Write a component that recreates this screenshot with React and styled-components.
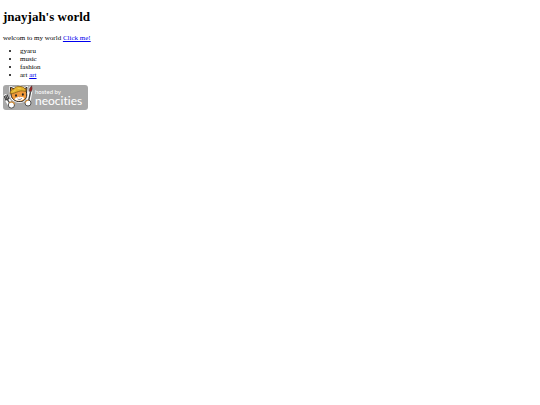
import styled, { createGlobalStyle } from "styled-components";

const GlobalStyle = createGlobalStyle`
	body {
		margin: 0;
		background: #fff;
		color: #000;
		font-family: "Liberation Serif", "Times New Roman", serif;
		font-size: 7px;
		line-height: 8px;
	}
`;

const Page = styled.main`
	padding: 9px 3px;
`;

const Title = styled.h1`
	margin: 0 0 9px;
	font-size: 13px;
	line-height: 16px;
`;

const Intro = styled.p`
	margin: 0 0 5px;
`;

const Link = styled.a`
	color: #0000ee;
	text-decoration: underline;
`;

const Interests = styled.ul`
	margin: 0 0 6px;
	padding-left: 17px;
`;

const BadgeLink = styled.a`
	display: inline-block;
`;

const Badge = styled.svg`
	display: block;
	width: 85px;
	height: 25px;
`;

const BadgeText = styled.text`
	fill: #fff;
	font-family: Lato, "Open Sans", sans-serif;
	font-size: ${(props) => props.$size}px;
	font-variant-ligatures: none;
`;

const NeocitiesBadge = () => {
	return (
		<Badge viewBox="0 0 85 25" role="img" aria-label="Hosted by Neocities">
			<rect width="85" height="25" rx="3" fill="#a8a8a8" />
			{/* fork */}
			<path d="M3 11.5l1 2.5L7 19" stroke="#fff" strokeWidth="5" strokeLinecap="round" fill="none" />
			<path
				d="M1.4 11.4l1.3 3.4 3.1-1.2-1.6-3.7M2.8 10.6l1.3 3.6L7.4 19"
				fill="none"
				stroke="#444"
				strokeWidth="1.3"
				strokeLinecap="round"
			/>
			{/* brush */}
			<path d="M28 3l-2.4 13" stroke="#fff" strokeWidth="4" strokeLinecap="round" />
			<path d="M27.5 7l-1.9 9" stroke="#444" strokeWidth="1.4" />
			<path d="M26.2 6.2c0-2.6 1-4 2.5-5.4 1 2 .8 3.9-.5 5.9z" fill="#9c2222" stroke="#333" strokeWidth=".6" />
			{/* cat */}
			<g transform="translate(2.4 .7) scale(.9)">
				<path
					d="M6.2 8.2L5.5 1.7 10.3 3.6C14 .2 18.8.5 21 3.4l3-1.6-.6 6.7c1.3 4.7-2 9-6.9 9.2C10.6 17.9 5.8 14.4 6.2 8.2z"
					fill="none"
					stroke="#fff"
					strokeWidth="2.8"
					strokeLinejoin="round"
				/>
				<path
					d="M6.2 8.2L5.5 1.7 10.3 3.6C14 .2 18.8.5 21 3.4l3-1.6-.6 6.7c1.3 4.7-2 9-6.9 9.2C10.6 17.9 5.8 14.4 6.2 8.2z"
					fill="#f09a3c"
					stroke="#222"
					strokeWidth="1.1"
				/>
				<path d="M10 15c1-1.3 2.4-2 4.2-2.2l1.6-1.6 1.5 1.4c1.8-.1 3 .4 3.8 1.2-1.2 2-3 2.9-5.2 3-2.4.1-4.5-.5-5.9-1.8z" fill="#fff" />
				<path
					d="M5.2 9C5.3 5.6 7 4 9.5 3.4 11.6.4 15 .3 17.7 1.1c2.8.1 4.7 2 5.2 5.4-3-.7-5.4-1.2-8.2-.1-3.3 1-5.6 2.6-9.5 2.6z"
					fill="#e3b32f"
					stroke="#7b5415"
					strokeWidth=".8"
				/>
				<path d="M8.5 6.5l3-1.8M13.6 2.9l3.6.6" stroke="#f4d660" strokeWidth=".8" />
				<ellipse cx="11.8" cy="10.9" rx="1" ry="1.4" fill="#222" />
				<ellipse cx="19.4" cy="9.8" rx="1" ry="1.4" fill="#222" />
				<path d="M14.9 12l2-.3-.8 1.3z" fill="#a33c20" />
				<path d="M13.6 14.7c1.4 1 3.6.7 4.7-.7" fill="none" stroke="#555" strokeWidth=".8" />
			</g>
			{/* paws */}
			<circle cx="8.4" cy="20" r="3.1" fill="#fff" stroke="#444" strokeWidth=".9" />
			<path d="M6.5 18c1.7-2 4.7-.9 4.9 1.4" fill="none" stroke="#e99a38" strokeWidth="1.1" />
			<circle cx="25" cy="18" r="3" fill="#fff" stroke="#444" strokeWidth=".9" />
			<path d="M22.2 17.6c.6-1.8 1.8-2.5 3.3-2.4" fill="none" stroke="#e99a38" strokeWidth="1.1" />
			<BadgeText x="32" y="9" $size={6}>
				hosted by
			</BadgeText>
			<BadgeText x="32" y="20" $size={12}>
				neocities
			</BadgeText>
		</Badge>
	);
};

const App = () => {
	return (
		<>
			<GlobalStyle />
			<Page>
				<Title>jnayjah's world</Title>
				<Intro>
					welcom to my world <Link href="#">Click me!</Link>
				</Intro>
				<Interests>
					<li>gyaru</li>
					<li>music</li>
					<li>fashion</li>
					<li>
						art <Link href="#art">art</Link>
					</li>
				</Interests>
				<BadgeLink href="https://neocities.org">
					<NeocitiesBadge />
				</BadgeLink>
			</Page>
		</>
	);
};

export default App;
